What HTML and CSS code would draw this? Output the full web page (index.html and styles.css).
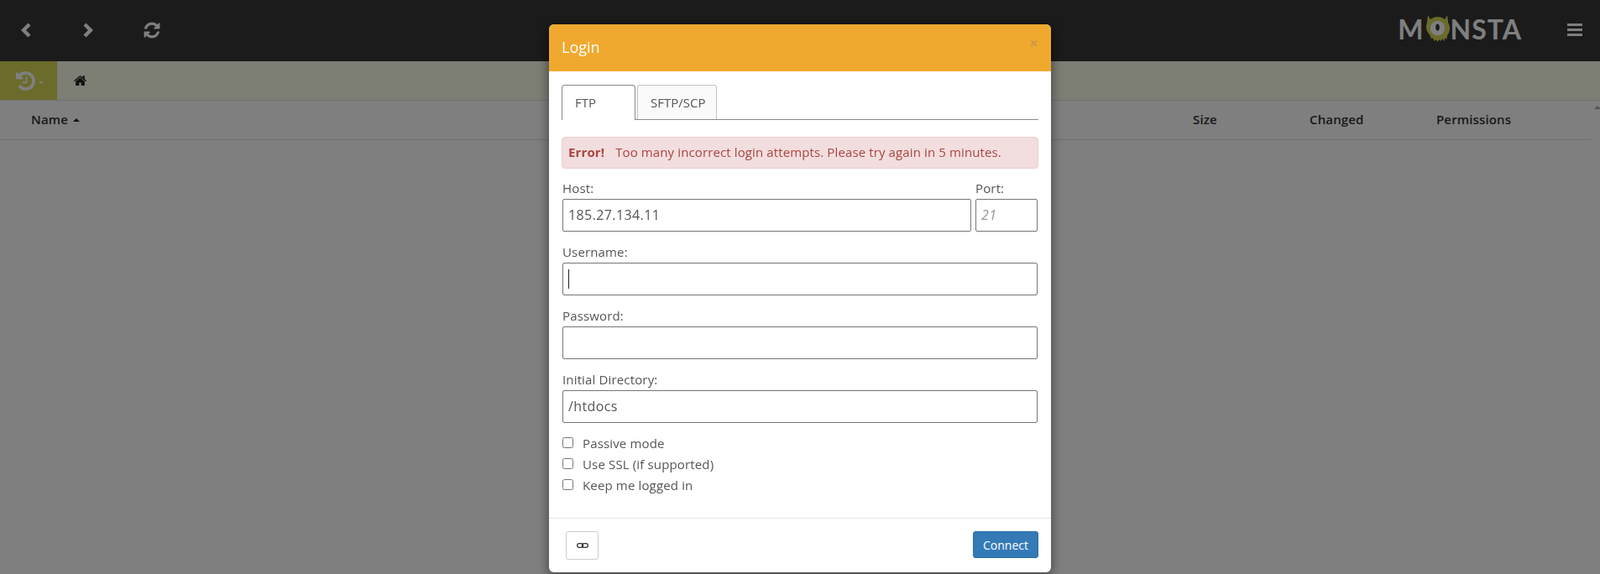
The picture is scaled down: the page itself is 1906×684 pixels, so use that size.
FILE: index.html
```html
<!DOCTYPE html>
<html lang="en">
<head>
  <meta charset="UTF-8" />
  <title>Monsta FTP</title>
  <link rel="stylesheet" href="styles.css">
</head>
<body>

  <!-- Top toolbar -->
  <header class="toolbar">
    <div class="toolbar-nav">
      <svg class="icon-chevron" viewBox="0 0 12 18"><path d="M10 2 3 9l7 7"/></svg>
      <svg class="icon-chevron" viewBox="0 0 12 18"><path d="M2 2l7 7-7 7"/></svg>
      <svg class="icon-refresh" viewBox="0 0 1792 1792"><path d="M1639 1056q0 5-1 7-64 268-268 434.5t-478 166.5q-146 0-282.5-55t-243.5-157l-129 129q-19 19-45 19t-45-19-19-45v-448q0-26 19-45t45-19h448q26 0 45 19t19 45-19 45l-137 137q71 66 161 102t187 36q134 0 250-65t186-179q11-17 53-117 8-23 30-23h192q13 0 22.5 9.5t9.5 22.5zm25-800v448q0 26-19 45t-45 19h-448q-26 0-45-19t-19-45 19-45l138-138q-148-137-349-137-134 0-250 65t-186 179q-11 17-53 117-8 23-30 23h-199q-13 0-22.5-9.5t-9.5-22.5v-7q65-268 270-434.5t480-166.5q146 0 284 55.5t245 156.5l130-129q19-19 45-19t45 19 19 45z"/></svg>
    </div>
    <div class="toolbar-right">
      <div class="logo">
        <span>M</span>
        <svg class="logo-eye" viewBox="0 0 30 34">
          <path class="eye-fur" d="M3 0l3 5a15 15 0 0 1 18 0l3-5 1 9a15 15 0 0 1-1 16l-1 5-2-2-1 4-2-3-2 3-2-2-2 3-2-3-2 2-2-4-2 1-1-4A15 15 0 0 1 2 9z"/>
          <circle class="eye-white" cx="15" cy="16" r="9"/>
          <ellipse class="eye-pupil" cx="15" cy="15" rx="2.4" ry="4.2"/>
        </svg>
        <span>NSTA</span>
      </div>
      <div class="hamburger"><i></i><i></i><i></i></div>
    </div>
  </header>

  <!-- Breadcrumb bar -->
  <div class="crumbs">
    <div class="history-btn">
      <svg class="icon-history" viewBox="128 128 1536 1536"><path d="M1664 896q0 156-61 298t-164 245-245 164-298 61q-172 0-327-72.5t-264-204.5q-7-10-6.5-22.5t8.5-20.5l137-138q10-9 25-9 16 2 23 12 73 95 179 147t225 52q104 0 198.5-40.5t163.5-109.5 109.5-163.5 40.5-198.5-40.5-198.5-109.5-163.5-163.5-109.5-198.5-40.5q-98 0-188 35.5t-160 101.5l137 138q31 30 14 69-17 40-59 40h-448q-26 0-45-19t-19-45v-448q0-42 40-59 39-17 69 14l130 129q107-101 244.5-156.5t284.5-55.5q156 0 298 61t245 164 164 245 61 298zm-640-288v448q0 14-9 23t-23 9h-320q-14 0-23-9t-9-23v-64q0-14 9-23t23-9h224v-352q0-14 9-23t23-9h64q14 0 23 9t9 23z"/></svg>
      <span class="caret-small"></span>
    </div>
    <svg class="icon-home" viewBox="96 128 1600 1408"><path d="M1472 992v480q0 26-19 45t-45 19h-384v-384h-256v384h-384q-26 0-45-19t-19-45v-480q0-1 .5-3t.5-3l575-474 575 474q1 2 1 6zm223-69l-62 74q-8 9-21 11h-3q-13 0-21-7l-692-577-692 577q-12 8-24 7-13-2-21-11l-62-74q-8-10-7-23.5t11-21.5l719-599q32-26 76-26t76 26l244 204v-195q0-14 9-23t23-9h192q14 0 23 9t9 23v408l219 182q10 8 11 21.5t-7 23.5z"/></svg>
  </div>

  <!-- File list -->
  <div class="file-list">
    <div class="file-head">
      <div class="col-name">Name <span class="sort-up"></span></div>
      <div>Size</div>
      <div>Changed</div>
      <div>Permissions</div>
    </div>
    <div class="scrollbar"><span class="scroll-up"></span></div>
  </div>

  <div class="backdrop"></div>

  <!-- Login dialog -->
  <div class="modal-wrap">
    <div class="modal">
      <div class="modal-header">
        <h4>Login</h4>
        <span class="close">&times;</span>
      </div>
      <div class="modal-body">
        <ul class="tabs">
          <li class="tab active">FTP</li>
          <li class="tab">SFTP/SCP</li>
        </ul>
        <div class="alert"><strong>Error!</strong><span>Too many incorrect login attempts. Please try again in 5 minutes.</span></div>

        <div class="host-row">
          <div class="field host">
            <label>Host:</label>
            <input type="text" value="185.27.134.11">
          </div>
          <div class="field port">
            <label>Port:</label>
            <input type="text" placeholder="21">
          </div>
        </div>
        <div class="field">
          <label>Username:</label>
          <div class="input-wrap">
            <input type="text">
            <span class="text-caret"></span>
          </div>
        </div>
        <div class="field">
          <label>Password:</label>
          <input type="password">
        </div>
        <div class="field">
          <label>Initial Directory:</label>
          <input type="text" value="/htdocs">
        </div>

        <label class="check"><input type="checkbox">Passive mode</label>
        <label class="check"><input type="checkbox">Use SSL (if supported)</label>
        <label class="check"><input type="checkbox">Keep me logged in</label>
      </div>
      <div class="modal-footer">
        <button class="btn btn-link">
          <svg class="icon-link" viewBox="0 0 14 6"><rect x="0.6" y="0.6" width="7" height="4.8" rx="2.4"/><rect x="6.4" y="0.6" width="7" height="4.8" rx="2.4"/></svg>
        </button>
        <button class="btn btn-primary">Connect</button>
      </div>
    </div>
  </div>

</body>
</html>
```

FILE: styles.css
```css
html, body {
  height: 100%;
}
body {
  margin: 0;
  background-color: #fff;
  font-family: "Open Sans", sans-serif;
  font-size: 15px;
  letter-spacing: 0.15px;
  color: #333;
  overflow: hidden;
}

/* Toolbar */
.toolbar {
  height: 73px;
  background-color: #363636;
  display: flex;
  justify-content: space-between;
  align-items: center;
}
.toolbar-nav {
  display: flex;
  align-items: center;
  padding-left: 25px;
}
.icon-chevron {
  width: 12px;
  height: 18px;
  margin-right: 62px;
  margin-top: -2px;
}
.icon-chevron path {
  fill: none;
  stroke: #fff;
  stroke-width: 4.4;
}
.icon-refresh {
  width: 22px;
  height: 22px;
  margin-left: -3px;
  margin-top: -1px;
  fill: #fff;
}
.toolbar-right {
  display: flex;
  align-items: center;
  padding-right: 21px;
}
.logo {
  display: flex;
  align-items: center;
  font-family: Lato, sans-serif;
  font-weight: 700;
  font-size: 32px;
  line-height: 32px;
  letter-spacing: 1px;
  color: #fff;
  margin-right: 54px;
  margin-top: -3px;
}
.logo-eye {
  width: 29px;
  height: 33px;
  margin: -2px 1px 0 1px;
}
.eye-fur { fill: #d6d656; }
.eye-white { fill: #fff; }
.eye-pupil { fill: #363636; }
.hamburger {
  width: 18px;
  display: flex;
  flex-direction: column;
  gap: 3px;
  margin-top: -2px;
}
.hamburger i {
  display: block;
  height: 3px;
  background-color: #fff;
}

/* Breadcrumbs */
.crumbs {
  height: 46px;
  background-color: #fafce8;
  border-bottom: 1px solid #e0e0e0;
  display: flex;
  align-items: center;
}
.history-btn {
  width: 68px;
  height: 46px;
  background-color: #d6d656;
  color: #fff;
  display: flex;
  align-items: center;
  padding-left: 19px;
  box-sizing: border-box;
}
.icon-history {
  width: 23px;
  height: 23px;
  fill: #fff;
}
.caret-small {
  width: 0;
  height: 0;
  margin: 5px 0 0 4px;
  border-left: 3.5px solid transparent;
  border-right: 3.5px solid transparent;
  border-top: 3.5px solid #fff;
}
.icon-home {
  width: 15px;
  height: 13px;
  margin-left: 20px;
  margin-top: -1px;
  fill: #222;
}

/* File list */
.file-list {
  position: relative;
  height: 564px;
}
.file-head {
  height: 47px;
  box-sizing: border-box;
  padding: 0 0 2px 37px;
  margin-right: 10px;
  border-bottom: 1px solid #e0e0e0;
  display: grid;
  grid-template-columns: 1fr 139px 151px 185px;
  align-items: center;
  font-weight: 600;
}
.sort-up {
  display: inline-block;
  vertical-align: middle;
  margin-left: 2px;
  margin-top: -2px;
  border-left: 4.5px solid transparent;
  border-right: 4.5px solid transparent;
  border-bottom: 4.5px solid #222;
}
.scrollbar {
  position: absolute;
  top: 0;
  right: 0;
  bottom: 0;
  width: 10px;
  background-color: #fff;
}
.scroll-up {
  position: absolute;
  top: 6px;
  left: 3px;
  border-left: 4px solid transparent;
  border-right: 4px solid transparent;
  border-bottom: 4px solid #a3a3a3;
}

/* Dialog */
.backdrop {
  position: fixed;
  inset: 0;
  background-color: rgba(0, 0, 0, 0.5);
}
.modal-wrap {
  position: fixed;
  inset: 0;
  padding-top: 29px;
}
.modal {
  width: 598px;
  margin: 0 auto;
  background-color: #fff;
  border-radius: 6px;
  box-shadow: 0 5px 15px rgba(0, 0, 0, 0.5);
  overflow: hidden;
}
.modal-header {
  height: 56px;
  background-color: #f0a92e;
  color: #fff;
  display: flex;
  justify-content: space-between;
  padding: 0 15px;
  box-sizing: border-box;
}
.modal-header h4 {
  margin: 0;
  font-size: 18px;
  font-weight: 400;
  letter-spacing: 0;
  line-height: 54px;
}
.close {
  font-size: 18px;
  font-weight: 700;
  line-height: 18px;
  margin: 13px 0 0 0;
  color: #c99a45;
}
.modal-body {
  padding: 16px 15px 0 15px;
  height: 532px;
  box-sizing: border-box;
}

/* Tabs */
.tabs {
  list-style: none;
  margin: 0;
  padding: 0;
  height: 42px;
  box-sizing: border-box;
  border-bottom: 1px solid #8a8a8a;
  display: flex;
  gap: 2px;
  color: #555;
  letter-spacing: 0;
}
.tab {
  width: 95px;
  height: 41px;
  box-sizing: border-box;
  padding: 0 0 0 15px;
  line-height: 41px;
  background-color: #fafafa;
  border: 1px solid #c4c4c4;
  border-bottom: 0;
  border-radius: 4px 4px 0 0;
}
.tab.active {
  height: 42px;
  width: 88px;
  background-color: #fff;
  border-color: #8a8a8a;
}

.alert {
  margin-top: 20px;
  height: 38px;
  box-sizing: border-box;
  padding: 0 7px;
  line-height: 34px;
  letter-spacing: 0.12px;
  background-color: #f2dede;
  border: 1px solid #ebccd1;
  border-radius: 4px;
  color: #a94442;
}
.alert span {
  margin-left: 13px;
}

/* Form */
.host-row {
  display: flex;
  gap: 5px;
}
.host { flex: 1; }
.port { width: 74px; }
.field {
  padding: 0 1px;
  margin-top: 12px;
}
.host-row .field { margin-top: 11px; }
.host-row .field:first-child { padding-right: 0; }
.host-row .field:last-child { padding-left: 0; }
.field label {
  display: block;
  height: 25px;
  line-height: 25px;
  color: #555;
}
.field input {
  display: block;
  width: 100%;
  height: 39px;
  box-sizing: border-box;
  padding: 0 6px 1px 6px;
  border: 1px solid #767676;
  border-radius: 2px;
  outline: none;
  font-family: "Open Sans", sans-serif;
  font-size: 16px;
  letter-spacing: 0.4px;
  color: #555;
  background-color: #fff;
}
.field input::placeholder {
  color: #999;
  font-style: italic;
}
.input-wrap {
  position: relative;
}
.text-caret {
  position: absolute;
  left: 7px;
  top: 8px;
  width: 1px;
  height: 23px;
  background-color: #222;
}
.check {
  display: flex;
  align-items: center;
  height: 25px;
  box-sizing: border-box;
  color: #555;
  padding: 0 0 2px 1px;
}
.check input {
  width: 13px;
  height: 13px;
  margin: 0 11px 0 0;
}
.field + .check {
  margin-top: 12px;
}

/* Footer */
.modal-footer {
  height: 65px;
  box-sizing: border-box;
  border-top: 1px solid #e5e5e5;
  display: flex;
  justify-content: space-between;
  align-items: flex-start;
  padding: 15px 15px 0 20px;
}
.btn {
  font-family: "Open Sans", sans-serif;
  font-size: 14px;
  border-radius: 3px;
  padding: 0;
  box-sizing: border-box;
}
.btn-link {
  width: 39px;
  height: 34px;
  background-color: #fff;
  border: 1px solid #ccc;
  display: flex;
  align-items: center;
  justify-content: center;
}
.icon-link {
  width: 14px;
  height: 6px;
}
.icon-link rect {
  fill: none;
  stroke: #333;
  stroke-width: 1.2;
}
.btn-primary {
  width: 78px;
  height: 32px;
  background-color: #337ab7;
  border: 1px solid #2e6da4;
  color: #fff;
}
```
